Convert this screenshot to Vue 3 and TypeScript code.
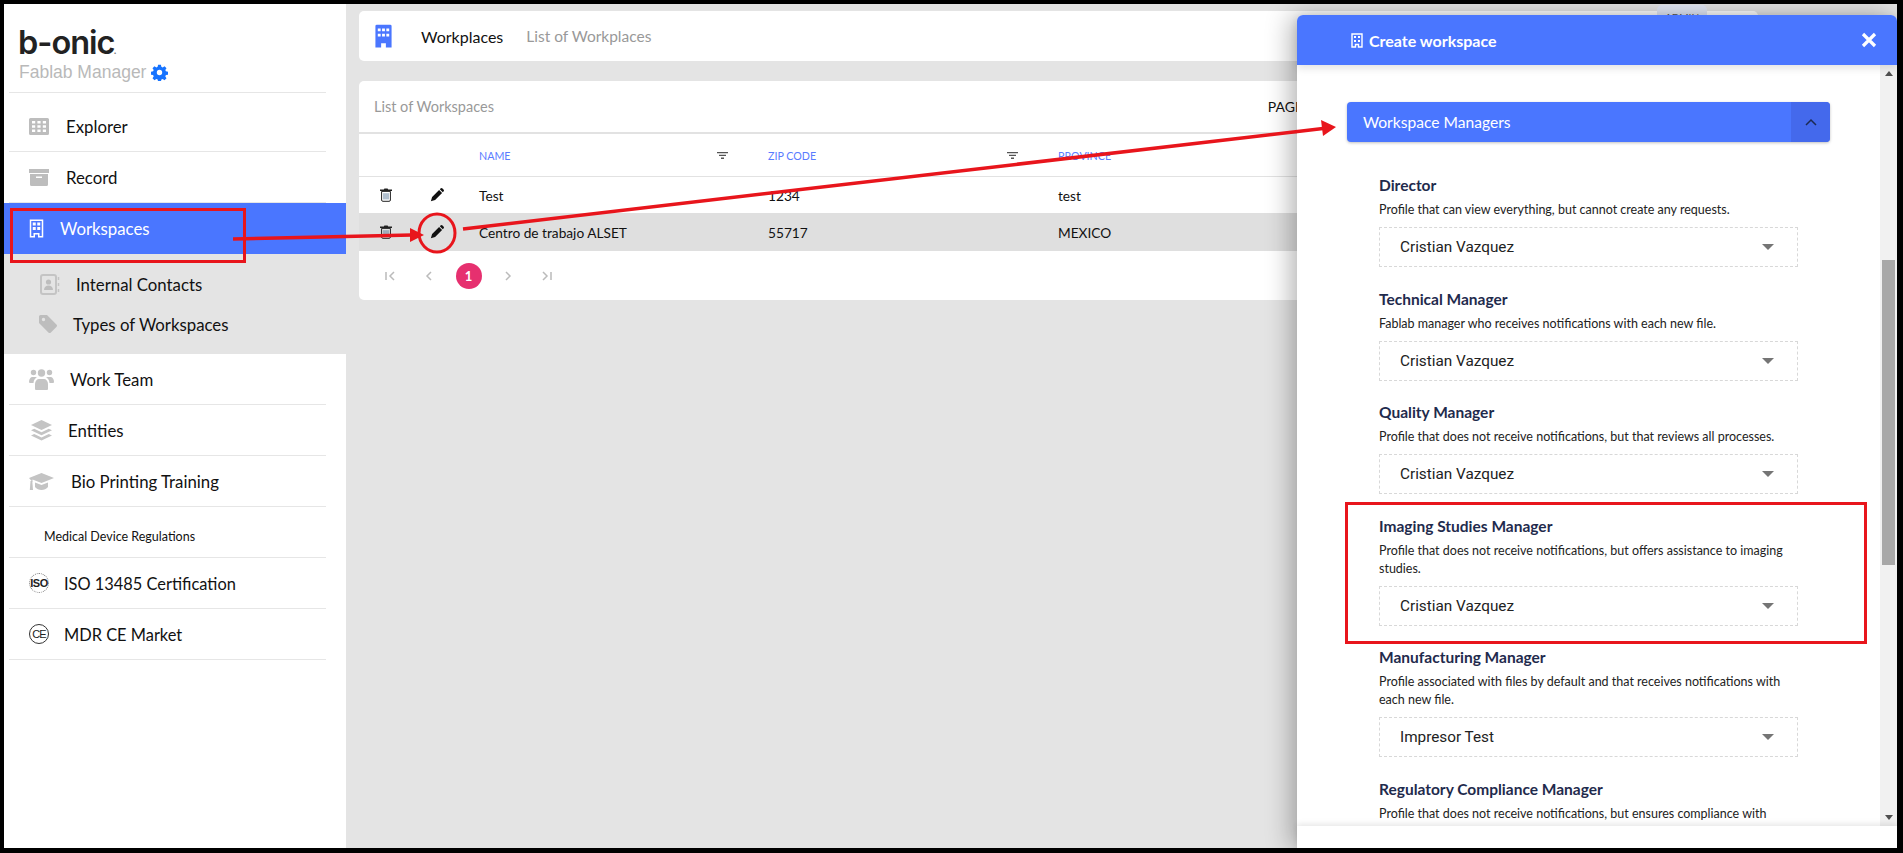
<script setup lang="ts">
interface NavItem {
  label: string
  icon: string
  gap: number
}

interface Manager {
  title: string
  desc: string
  value?: string
}

const topItems: NavItem[] = [
  { label: 'Explorer', icon: 'grid', gap: 17 },
  { label: 'Record', icon: 'archive', gap: 17 }
]

const bottomItems: NavItem[] = [
  { label: 'Work Team', icon: 'users', gap: 16 },
  { label: 'Entities', icon: 'layers', gap: 14 },
  { label: 'Bio Printing Training', icon: 'cap', gap: 17 }
]

const managers: Manager[] = [
  { title: 'Director', desc: 'Profile that can view everything, but cannot create any requests.', value: 'Cristian Vazquez' },
  { title: 'Technical Manager', desc: 'Fablab manager who receives notifications with each new file.', value: 'Cristian Vazquez' },
  { title: 'Quality Manager', desc: 'Profile that does not receive notifications, but that reviews all processes.', value: 'Cristian Vazquez' },
  { title: 'Imaging Studies Manager', desc: 'Profile that does not receive notifications, but offers assistance to imaging studies.', value: 'Cristian Vazquez' },
  { title: 'Manufacturing Manager', desc: 'Profile associated with files by default and that receives notifications with each new file.', value: 'Impresor Test' },
  { title: 'Regulatory Compliance Manager', desc: 'Profile that does not receive notifications, but ensures compliance with' }
]

const rows = [
  { name: 'Test', zip: '1234', province: 'test' },
  { name: 'Centro de trabajo ALSET', zip: '55717', province: 'MEXICO' }
]

const buildingPath = 'M3 0h14a1.5 1.5 0 0 1 1.5 1.5V24h-6v-4.5h-5V24h-6V1.5A1.5 1.5 0 0 1 3 0z'
const pencilPath = 'M11.2 1.4l3.4 3.4 .8-.8a1.6 1.6 0 0 0 0-2.3L14.3.6a1.6 1.6 0 0 0-2.3 0zM10.4 2.2L2.4 10.2 1 15l4.8-1.4 8-8z'
</script>

<template>
  <div class="frame">
    <aside class="sidebar">
      <div class="brand">
        <div class="logo">b-onic<span class="logo-dot">.</span></div>
        <div class="app-name">
          Fablab Manager
          <svg class="gear" viewBox="0 0 24 24"><path fill="#1673ff" fill-rule="evenodd" d="M10 1h4l.6 3 1.9.8 2.6-1.7 2.8 2.8-1.7 2.6.8 1.9 3 .6v4l-3 .6-.8 1.9 1.7 2.6-2.8 2.8-2.6-1.7-1.9.8-.6 3h-4l-.6-3-1.9-.8-2.6 1.7-2.8-2.8 1.7-2.6-.8-1.9-3-.6v-4l3-.6.8-1.9-1.7-2.6 2.8-2.8 2.6 1.7 1.9-.8zM12 8.2a3.8 3.8 0 1 0 0 7.6 3.800 3.800 0 0 0 0-7.600z"/></svg>
        </div>
      </div>

      <a v-for="item in topItems" :key="item.label" class="nav-item" :class="item.icon">
        <svg v-if="item.icon === 'grid'" class="nav-icon" viewBox="0 0 20 17"><path fill="#bdbdbd" fill-rule="evenodd" d="M1.5 0h17A1.5 1.5 0 0 1 20 1.5v14a1.5 1.5 0 0 1-1.5 1.5h-17A1.5 1.5 0 0 1 0 15.5v-14A1.5 1.5 0 0 1 1.5 0zM3 3v2.500h3.200V3zm5.400 0v2.500h3.200V3zm5.400 0v2.500H17V3zM3 7.300v2.500h3.200V7.300zm5.400 0v2.500h3.200V7.300zm5.400 0v2.500H17V7.300zM3 11.600v2.500h3.200v-2.500zm5.400 0v2.500h3.200v-2.500zm5.400 0v2.500H17v-2.500z"/></svg>
        <svg v-else class="nav-icon" viewBox="0 0 20 17"><path fill="#bdbdbd" fill-rule="evenodd" d="M0 0h20v4H0zM1 5h18v10.500a1.500 1.500 0 0 1-1.500 1.500h-15A1.500 1.500 0 0 1 1 15.500zM7 7.500V9h6V7.500z"/></svg>
        <span :style="{ marginLeft: item.gap + 'px' }">{{ item.label }}</span>
      </a>

      <a class="nav-item active">
        <svg class="active-icon" viewBox="0 0 20 24"><path fill="none" stroke="#fff" stroke-width="2" d="M2 1h16v22h-5v-4H7v4H2z"/><path fill="#fff" d="M5 4h4v4H5zM11 4h4v4h-4zM5 10h4v4H5zM11 10h4v4h-4z"/></svg>
        <span class="active-label">Workspaces</span>
      </a>
      <div class="sub-nav">
        <a class="sub-item first">
          <svg class="contact-icon" viewBox="0 0 20 21"><rect x="1" y="1" width="15" height="19" rx="2" fill="none" stroke="#c4c4c4" stroke-width="2"/><circle cx="8.500" cy="8" r="2.600" fill="#bdbdbd"/><path fill="#bdbdbd" d="M4 16c0-3 2-4.500 4.500-4.500S13 13 13 16z"/><path stroke="#c4c4c4" stroke-width="1.500" d="M18.500 3v3M18.500 9v3M18.500 15v3"/></svg>
          <span>Internal Contacts</span>
        </a>
        <a class="sub-item second">
          <svg class="tag-icon" viewBox="0 0 18 18"><path fill="#bdbdbd" fill-rule="evenodd" d="M1.500 0H8l9.400 9.400a1.800 1.800 0 0 1 0 2.500l-5.500 5.500a1.800 1.800 0 0 1-2.500 0L0 8V1.500A1.500 1.500 0 0 1 1.500 0zM4.500 2.800a1.700 1.700 0 1 0 0 3.400 1.700 1.700 0 0 0 0-3.400z"/></svg>
          <span>Types of Workspaces</span>
        </a>
      </div>

      <a v-for="item in bottomItems" :key="item.label" class="nav-item">
        <svg v-if="item.icon === 'users'" class="nav-icon wide" viewBox="0 0 25 21"><g fill="#c4c4c4"><circle cx="12.500" cy="4" r="3.700"/><circle cx="4.500" cy="3.500" r="2.700"/><circle cx="20.500" cy="3.500" r="2.700"/><path d="M6 20v-5c0-3 2-5 4-5h5c2 0 4 2 4 5v5a1 1 0 0 1-1 1H7a1 1 0 0 1-1-1z"/><path d="M0 13c0-3 1.500-5 3.500-5h3c.5 0 1 .2 1.400.5C6 9.500 4.700 11 4.500 14H1a1 1 0 0 1-1-1zM25 13c0-3-1.500-5-3.500-5h-3c-.5 0-1 .2-1.400.5 1.900 1 3.200 2.500 3.400 5.500h3.500a1 1 0 0 0 1-1z"/></g></svg>
        <svg v-else-if="item.icon === 'layers'" class="nav-icon wide" viewBox="0 0 25 21"><g fill="#c4c4c4"><path d="M12.500 0l10.500 5-10.500 5L2 5z"/><path d="M5.200 8.800l7.300 3.500 7.300-3.500L23 10.300l-10.500 5-10.500-5z"/><path d="M5.200 14l7.300 3.500L19.800 14l3.200 1.500-10.500 5-10.500-5z"/></g></svg>
        <svg v-else class="nav-icon wide" viewBox="0 0 25 21"><g fill="#c4c4c4"><path d="M12.500 2L25 7l-12.500 5L3.500 8.400V11L0 7z"/><path d="M6 11.500l6.500 2.600 6.500-2.600V16c-1.500 2-4 3-6.500 3S7.500 18 6 16z"/><path d="M1.500 10h1.800l.7 9H.8z"/></g></svg>
        <span :style="{ marginLeft: item.gap + 'px' }">{{ item.label }}</span>
      </a>

      <div class="section-label">Medical Device Regulations</div>

      <a class="nav-item">
        <span class="iso-icon">ISO</span>
        <span class="cert-label">ISO 13485 Certification</span>
      </a>
      <a class="nav-item">
        <span class="ce-icon">CE</span>
        <span class="cert-label">MDR CE Market</span>
      </a>
    </aside>

    <main class="main">
      <header class="top-card">
        <svg class="top-icon" viewBox="0 0 20 25"><path fill="#4a76ff" fill-rule="evenodd" :d="buildingPath"/><path fill="#fff" d="M4 4h3v3H4zM8.500 4h3v3h-3zM13 4h3v3h-3zM4 9.500h3v3H4zM8.500 9.500h3v3h-3zM13 9.500h3v3h-3z"/></svg>
        <span class="crumb">Workplaces</span>
        <span class="crumb-sub">List of Workplaces</span>
        <span class="admin-tab">ADMIN</span>
      </header>

      <section class="list-card">
        <div class="list-head">
          <span class="list-title">List of Workspaces</span>
          <span class="page-label">PAGE</span>
        </div>
        <div class="table-row head">
          <span class="col-del"></span>
          <span class="col-edit"></span>
          <span class="col-name">NAME<svg class="filter" viewBox="0 0 11 7"><path fill="#555" d="M0 0h11v1.200H0zM2 2.800h7V4H2zM4 5.600h3V7H4z"/></svg></span>
          <span class="col-zip">ZIP CODE<svg class="filter" viewBox="0 0 11 7"><path fill="#555" d="M0 0h11v1.200H0zM2 2.800h7V4H2zM4 5.600h3V7H4z"/></svg></span>
          <span class="col-prov">PROVINCE</span>
        </div>
        <div v-for="(row, i) in rows" :key="row.name" class="table-row" :class="{ hovered: i === 1 }">
          <span class="col-del">
            <svg class="trash" viewBox="0 0 12 14"><path fill="none" stroke="#222" stroke-width="1" d="M1.600 3.400h8.800V12a1.300 1.300 0 0 1-1.300 1.300H2.900A1.300 1.300 0 0 1 1.600 12z"/><path fill="none" stroke="#3a5f86" stroke-width=".8" d="M4 5.200v6.200M6 5.200v6.200M8 5.200v6.200"/><path fill="#222" d="M0 1.600h3.800L4.400.4h3.200l.6 1.200H12v1.400H0z"/></svg>
          </span>
          <span class="col-edit">
            <svg class="pencil" viewBox="0 0 16 16"><path fill="#111" :d="pencilPath"/></svg>
          </span>
          <span class="col-name">{{ row.name }}</span>
          <span class="col-zip">{{ row.zip }}</span>
          <span class="col-prov">{{ row.province }}</span>
        </div>
        <div class="pager">
          <svg class="pg" viewBox="0 0 12 12"><path fill="none" stroke="#bbb" stroke-width="1.500" d="M2 2v8M10 2L6 6l4 4"/></svg>
          <svg class="pg" viewBox="0 0 12 12"><path fill="none" stroke="#bbb" stroke-width="1.500" d="M8 2L4 6l4 4"/></svg>
          <span class="pg-current">1</span>
          <svg class="pg" viewBox="0 0 12 12"><path fill="none" stroke="#bbb" stroke-width="1.500" d="M4 2l4 4-4 4"/></svg>
          <svg class="pg" viewBox="0 0 12 12"><path fill="none" stroke="#bbb" stroke-width="1.500" d="M2 2l4 4-4 4M10 2v8"/></svg>
        </div>
      </section>
    </main>

    <div class="panel">
      <div class="panel-head">
        <svg class="panel-icon" viewBox="0 0 12 15"><path fill="none" stroke="#fff" stroke-width="1.400" d="M1 1h10v13H7.500v-2.500h-3V14H1z"/><path fill="#fff" d="M3 3h2v2H3zM7 3h2v2H7zM3 7h2v2H3zM7 7h2v2H7z"/></svg>
        <span class="panel-title">Create workspace</span>
        <svg class="close" viewBox="0 0 16 16"><path stroke="#fff" stroke-width="3.200" d="M2 2l12 12M14 2L2 14"/></svg>
      </div>
      <div class="panel-body">
        <div class="panel-scroll">
          <div class="accordion">
            <span>Workspace Managers</span>
            <span class="accordion-toggle">
              <svg viewBox="0 0 12 8"><path fill="none" stroke="#1c2a52" stroke-width="1.500" d="M1 7l5-5 5 5"/></svg>
            </span>
          </div>
          <div class="fields">
            <div v-for="m in managers" :key="m.title" class="field">
              <h4>{{ m.title }}</h4>
              <p>{{ m.desc }}</p>
              <div v-if="m.value" class="select">
                <span>{{ m.value }}</span>
                <i class="caret"></i>
              </div>
            </div>
          </div>
        </div>
        <div class="scrollbar">
          <i class="arrow-up"></i>
          <div class="track"><div class="thumb"></div></div>
          <i class="arrow-down"></i>
        </div>
      </div>
      <div class="panel-foot"></div>
    </div>

    <!-- tutorial marks drawn on top of the screenshot -->
    <svg class="marks" viewBox="0 0 1903 853" fill="none">
      <g stroke="#e8151c">
        <rect x="11.500" y="209.500" width="233" height="52" stroke-width="3" />
        <rect x="1346.500" y="503.500" width="519" height="139" stroke-width="3" />
        <ellipse cx="437" cy="233" rx="18" ry="19" stroke-width="3" />
        <path d="M233 239L412 235" stroke-width="3.500" />
        <path d="M463 229L1323 128.500" stroke-width="3.500" />
      </g>
      <path fill="#e8151c" d="M424 235L410 228V242z" />
      <path fill="#e8151c" d="M1336 127L1321 120L1323 136z" />
    </svg>
  </div>
</template>

<style>
html,
body {
  margin: 0;
  overflow: hidden;
}
</style>

<style scoped>
.frame {
  position: relative;
  box-sizing: border-box;
  width: 1903px;
  height: 853px;
  border-style: solid;
  border-color: #000;
  border-width: 4px 6px 5px 4px;
  background: #e4e4e4;
  display: flex;
  overflow: hidden;
  font-family: Lato, 'Liberation Sans', sans-serif;
  color: #111;
}

/* sidebar */
.sidebar {
  width: 342px;
  flex: none;
  background: #fff;
  display: flex;
  flex-direction: column;
}

.brand {
  height: 89px;
  box-sizing: border-box;
  margin: 0 20px 0 5px;
  padding: 21px 0 0 9px;
  border-bottom: 1px solid #e6e6e6;
}

.logo {
  height: 36px;
  font-family: Inter, sans-serif;
  font-weight: 600;
  font-size: 32.5px;
  line-height: 36px;
  letter-spacing: -1px;
  color: #222;
}

.logo-dot {
  font-size: 10px;
  color: #777;
  margin-left: -1px;
}

.app-name {
  display: flex;
  align-items: center;
  gap: 5px;
  font-family: 'Liberation Sans', sans-serif;
  font-size: 17.5px;
  line-height: 20px;
  color: #b9b9b9;
  margin: 1px 0 0 1px;
}

.gear {
  width: 17px;
  height: 17px;
}

.nav-item {
  height: 51px;
  display: flex;
  align-items: center;
  box-sizing: border-box;
  margin: 0 20px 0 5px;
  padding: 0 0 0 20px;
  border-bottom: 1px solid #e6e6e6;
  font-size: 16.8px;
  flex: none;
}

.nav-item.grid {
  height: 59px;
  padding-top: 8px;
}

.nav-icon {
  width: 20px;
  height: 17px;
  flex: none;
}

.nav-icon.wide {
  width: 25px;
  height: 21px;
}

.cert-label {
  margin-left: 15px;
  font-size: 16.4px;
}

.nav-item.active {
  margin: 0;
  padding-left: 25px;
  background: #4a76ff;
  border: none;
  color: #fff;
}

.active-icon {
  width: 15px;
  height: 19px;
  flex: none;
}

.active-label {
  margin-left: 16px;
}

.sub-nav {
  height: 100px;
  flex: none;
  box-sizing: border-box;
  padding-top: 10px;
  background: #e4e4e4;
  font-size: 16.8px;
}

.sub-item {
  display: flex;
  align-items: center;
  height: 40px;
}

.sub-item.first {
  padding-left: 36px;
}

.sub-item.second {
  padding-left: 35px;
}

.contact-icon {
  width: 20px;
  height: 21px;
  margin-right: 16px;
}

.tag-icon {
  width: 18px;
  height: 18px;
  margin-right: 16px;
}

.section-label {
  height: 51px;
  flex: none;
  box-sizing: border-box;
  margin: 0 20px 0 5px;
  padding: 22px 0 0 35px;
  border-bottom: 1px solid #e6e6e6;
  font-size: 12.5px;
  line-height: 16px;
}

.iso-icon {
  width: 20px;
  height: 20px;
  box-sizing: border-box;
  flex: none;
  border-radius: 50%;
  border: 1px dotted #777;
  display: flex;
  align-items: center;
  justify-content: center;
  font-family: 'Liberation Sans', sans-serif;
  font-size: 11px;
  font-weight: 700;
  letter-spacing: -0.5px;
  color: #222;
}

.ce-icon {
  width: 20px;
  height: 20px;
  box-sizing: border-box;
  flex: none;
  border-radius: 50%;
  border: 1.5px solid #333;
  display: flex;
  align-items: center;
  justify-content: center;
  font-family: 'Liberation Sans', sans-serif;
  font-size: 11px;
  letter-spacing: -1px;
  color: #222;
}

/* main */
.main {
  width: 1412px;
  flex: none;
  padding: 7px 0 0 13px;
  box-sizing: border-box;
}

.top-card {
  position: relative;
  height: 50px;
  background: #fff;
  border-radius: 5px;
  display: flex;
  align-items: center;
  padding-left: 15px;
  font-size: 16px;
}

.top-icon {
  width: 19px;
  height: 25px;
}

.crumb {
  margin-left: 28px;
}

.crumb-sub {
  margin-left: 23px;
  color: #999;
  font-size: 15.5px;
}

.admin-tab {
  position: absolute;
  top: -6px;
  left: 1298px;
  width: 50px;
  height: 20px;
  box-sizing: border-box;
  padding-top: 6px;
  text-align: center;
  background: #e3e9f7;
  border-radius: 5px;
  font-size: 10px;
  line-height: 12px;
  color: #555;
}

.list-card {
  height: 219px;
  margin-top: 20px;
  background: #fff;
  border-radius: 5px;
}

.list-head {
  height: 53px;
  box-sizing: border-box;
  display: flex;
  align-items: center;
  justify-content: space-between;
  padding: 0 0 0 15px;
  border-bottom: 2px solid #e2e2e2;
  font-size: 14.5px;
}

.list-title {
  color: #999;
}

.page-label {
  font-size: 14px;
  margin-right: 455px;
}

.table-row {
  display: grid;
  grid-template-columns: 51px 69px 289px 290px 1fr;
  align-items: center;
  height: 36px;
  font-size: 13.7px;
}

.table-row.head {
  height: 43px;
  box-sizing: border-box;
  font-size: 10.7px;
  color: #5a7cff;
  border-bottom: 1px solid #e2e2e2;
}

.table-row.hovered {
  height: 38px;
  background: #dfdfdf;
}

.col-del {
  padding-left: 21px;
  display: flex;
}

.col-edit {
  padding-left: 20px;
  display: flex;
}

.col-name,
.col-zip {
  display: flex;
  align-items: center;
  justify-content: space-between;
  padding-right: 40px;
}

.trash {
  width: 12px;
  height: 14px;
}

.pencil {
  width: 14px;
  height: 14px;
}

.filter {
  width: 11px;
  height: 7px;
}

.pager {
  display: flex;
  align-items: center;
  gap: 27px;
  padding: 12px 0 0 25px;
}

.pg {
  width: 12px;
  height: 12px;
}

.pg-current {
  width: 26px;
  height: 26px;
  margin: 0 -6.5px;
  border-radius: 50%;
  background: #e6306f;
  color: #fff;
  font-size: 13px;
  font-weight: 700;
  display: flex;
  align-items: center;
  justify-content: center;
}

/* slide-in panel */
.panel {
  position: absolute;
  top: 11px;
  right: 0;
  bottom: 0;
  width: 600px;
  background: #fff;
  display: flex;
  flex-direction: column;
  border-radius: 6px 6px 0 0;
  box-shadow: -6px 0 26px rgba(0, 0, 0, 0.3);
}

.panel-head {
  height: 50px;
  flex: none;
  display: flex;
  align-items: center;
  padding: 0 20px 0 54px;
  background: #4a76ff;
  border-radius: 6px 6px 0 0;
  color: #fff;
  box-shadow: 0 3px 8px rgba(0, 0, 0, 0.12);
  position: relative;
  z-index: 1;
}

.panel-icon {
  width: 12px;
  height: 15px;
}

.panel-title {
  margin-left: 6px;
  font-size: 16px;
  font-weight: 700;
}

.close {
  width: 16px;
  height: 16px;
  margin-left: auto;
}

.panel-body {
  flex: 1;
  min-height: 0;
  display: flex;
}

.panel-scroll {
  flex: 1;
  overflow: hidden;
  padding: 37px 0 0 50px;
}

.accordion {
  width: 483px;
  height: 40px;
  display: flex;
  align-items: center;
  justify-content: space-between;
  box-sizing: border-box;
  padding-left: 16px;
  background: #4a76ff;
  border-radius: 4px;
  box-shadow: 0 1px 3px rgba(0, 0, 0, 0.25);
  color: #fff;
  font-size: 15.6px;
}

.accordion-toggle {
  width: 39px;
  height: 40px;
  display: flex;
  align-items: center;
  justify-content: center;
  background: #4469ec;
  border-radius: 0 4px 4px 0;
}

.accordion-toggle svg {
  width: 12px;
  height: 8px;
}

.fields {
  padding: 33px 0 0 32px;
  width: 419px;
}

.field {
  margin-bottom: 21.5px;
}

.field h4 {
  margin: 0;
  font-size: 15.5px;
  line-height: 20px;
  font-weight: 700;
  color: #1f2b4d;
}

.field p {
  margin: 6px 0 8px;
  font-size: 12.5px;
  line-height: 18px;
  color: #222;
}

.select {
  height: 40px;
  box-sizing: border-box;
  display: flex;
  align-items: center;
  justify-content: space-between;
  padding: 0 23px 0 20px;
  border: 1px dashed #d8d8d8;
  font-family: Roboto, sans-serif;
  font-size: 15.3px;
  color: #222;
}

.caret {
  width: 0;
  height: 0;
  border-left: 6px solid transparent;
  border-right: 6px solid transparent;
  border-top: 6px solid #757575;
}

.scrollbar {
  width: 17px;
  flex: none;
  background: #f1f1f1;
  display: flex;
  flex-direction: column;
  align-items: center;
}

.arrow-up,
.arrow-down {
  width: 0;
  height: 0;
  flex: none;
  border-left: 4px solid transparent;
  border-right: 4px solid transparent;
}

.arrow-up {
  margin: 6px 0;
  border-bottom: 5px solid #505050;
}

.arrow-down {
  margin: 6px 0;
  border-top: 5px solid #505050;
}

.track {
  flex: 1;
  width: 100%;
  padding-top: 178px;
  box-sizing: border-box;
}

.thumb {
  height: 305px;
  margin: 0 2px;
  background: #a8a8a8;
}

.panel-foot {
  height: 22px;
  flex: none;
  background: #fff;
  box-shadow: 0 -2px 6px rgba(0, 0, 0, 0.1);
  position: relative;
}

.marks {
  position: absolute;
  left: -4px;
  top: -4px;
  width: 1903px;
  height: 853px;
  pointer-events: none;
}
</style>
